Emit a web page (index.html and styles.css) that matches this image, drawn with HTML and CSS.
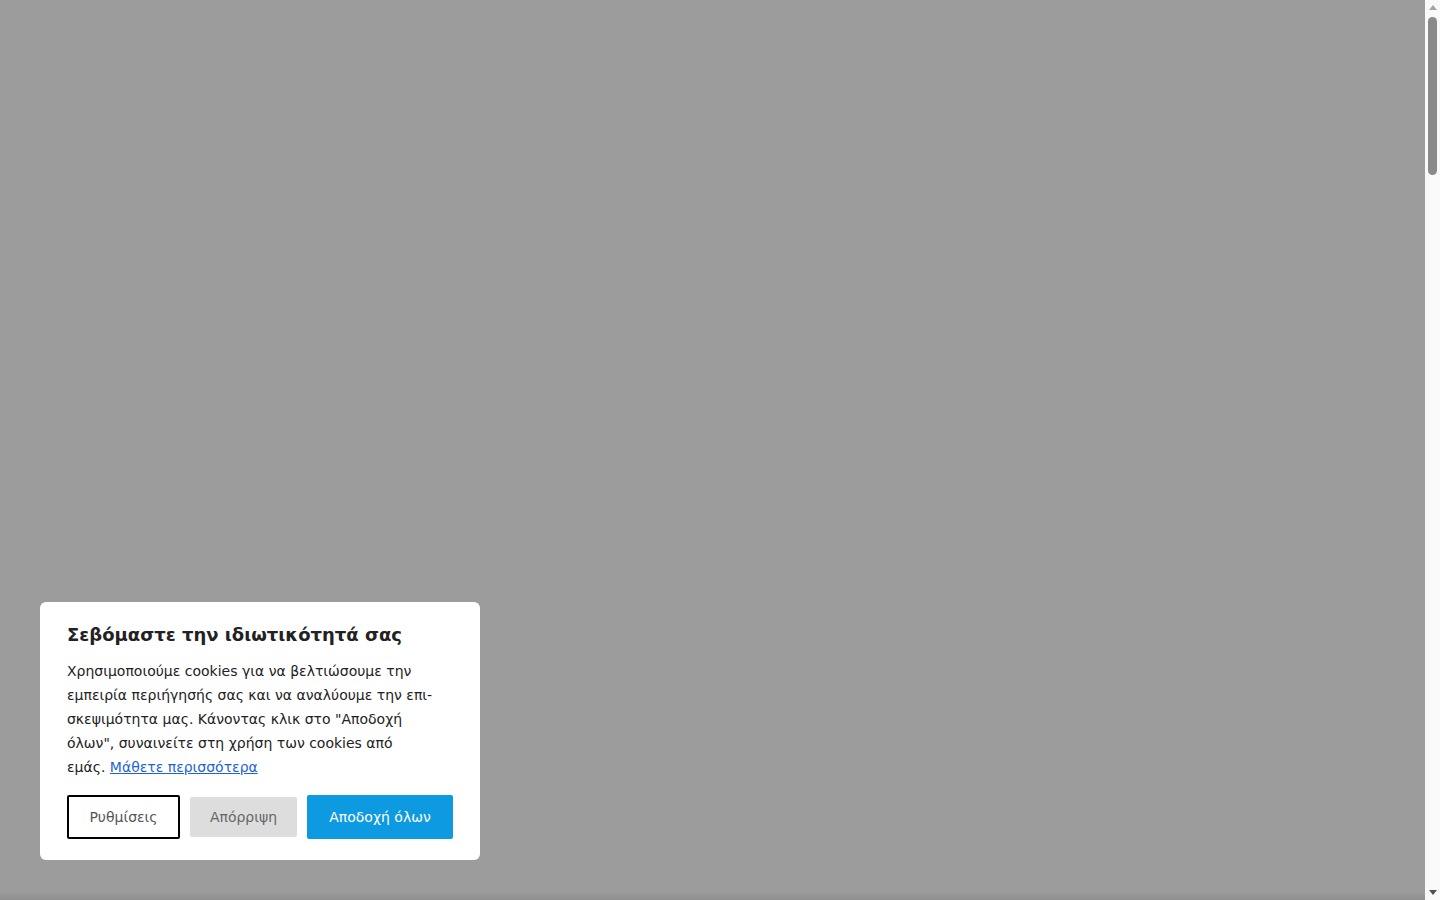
FILE: index.html
```html
<!DOCTYPE html>
<html lang="el">
<head>
<meta charset="utf-8">
<title>Cookies</title>
<link rel="stylesheet" href="styles.css">
</head>
<body>
<div class="overlay"></div>
<div class="bottom-shade"></div>
<div class="scrollbar" aria-hidden="true">
  <span class="scroll-arrow scroll-up"></span>
  <span class="scroll-thumb"></span>
  <span class="scroll-arrow scroll-down"></span>
</div>
<div class="cookie-card" role="dialog">
  <h2 class="cookie-title">Σεβόμαστε την ιδιωτικότητά σας</h2>
  <p class="cookie-text">Χρησιμοποιούμε cookies για να βελτιώσουμε την εμπειρία περιήγησής σας και να αναλύουμε την επι&shy;σκεψιμότητα μας. Κάνοντας κλικ στο "Αποδοχή όλων", συναινείτε στη χρήση των cookies από εμάς. <a href="#" class="cookie-link">Μάθετε περισσότερα</a></p>
  <div class="cookie-actions">
    <button class="btn btn-settings">Ρυθμίσεις</button>
    <button class="btn btn-reject">Απόρριψη</button>
    <button class="btn btn-accept">Αποδοχή όλων</button>
  </div>
</div>
</body>
</html>
```
FILE: styles.css
```css
html, body {
  margin: 0;
  padding: 0;
}
body {
  background: #ffffff;
  font-family: "DejaVu Sans", "Noto Sans", sans-serif;
}
.overlay {
  position: fixed;
  top: 0;
  left: 0;
  bottom: 0;
  right: 15px;
  background: rgba(0, 0, 0, 0.39);
}
.bottom-shade {
  position: fixed;
  left: 0;
  right: 15px;
  bottom: 0;
  height: 8px;
  background: linear-gradient(to bottom, rgba(0,0,0,0), rgba(0,0,0,0.08));
}
.scrollbar {
  position: fixed;
  top: 0;
  right: 0;
  bottom: 0;
  width: 15px;
  background: #f9f9f9;
  display: flex;
  flex-direction: column;
  align-items: center;
}
.scroll-arrow {
  width: 0;
  height: 0;
  border-left: 4px solid transparent;
  border-right: 4px solid transparent;
}
.scroll-up {
  margin-top: 5px;
  border-bottom: 5px solid #a3a3a3;
}
.scroll-down {
  margin-top: auto;
  margin-bottom: 5px;
  border-top: 5px solid #505050;
}
.scroll-thumb {
  margin-top: 7px;
  width: 9px;
  height: 158px;
  border-radius: 5px;
  background: #8a8a8a;
}
.cookie-card {
  position: fixed;
  left: 40px;
  bottom: 40px;
  width: 440px;
  box-sizing: border-box;
  padding: 22px 27px 21px;
  background: #ffffff;
  border-radius: 6px;
}
.cookie-title {
  margin: 0 0 13px;
  font-size: 18px;
  line-height: 1.2;
  font-weight: 700;
  color: #222222;
}
.cookie-text {
  margin: 0 0 16px;
  width: 367px;
  font-size: 14px;
  line-height: 24px;
  color: #222222;
  hyphens: manual;
}
.cookie-link {
  color: #1f63d8;
  text-decoration: underline;
}
.cookie-actions {
  display: flex;
  align-items: center;
  gap: 10px;
}
.btn {
  font-family: "DejaVu Sans", "Noto Sans", sans-serif;
  font-size: 14px;
  border-radius: 2px;
  cursor: pointer;
  padding: 0 20px;
}
.btn-settings {
  height: 44px;
  width: 113px;
  padding: 0;
  background: #ffffff;
  border: 2px solid #000000;
  color: #555555;
}
.btn-reject {
  height: 40px;
  width: 107px;
  padding: 0;
  background: #dddddd;
  border: none;
  color: #666666;
}
.btn-accept {
  height: 44px;
  width: 146px;
  padding: 0;
  background: #0e9ae0;
  border: none;
  color: #ffffff;
}
```
